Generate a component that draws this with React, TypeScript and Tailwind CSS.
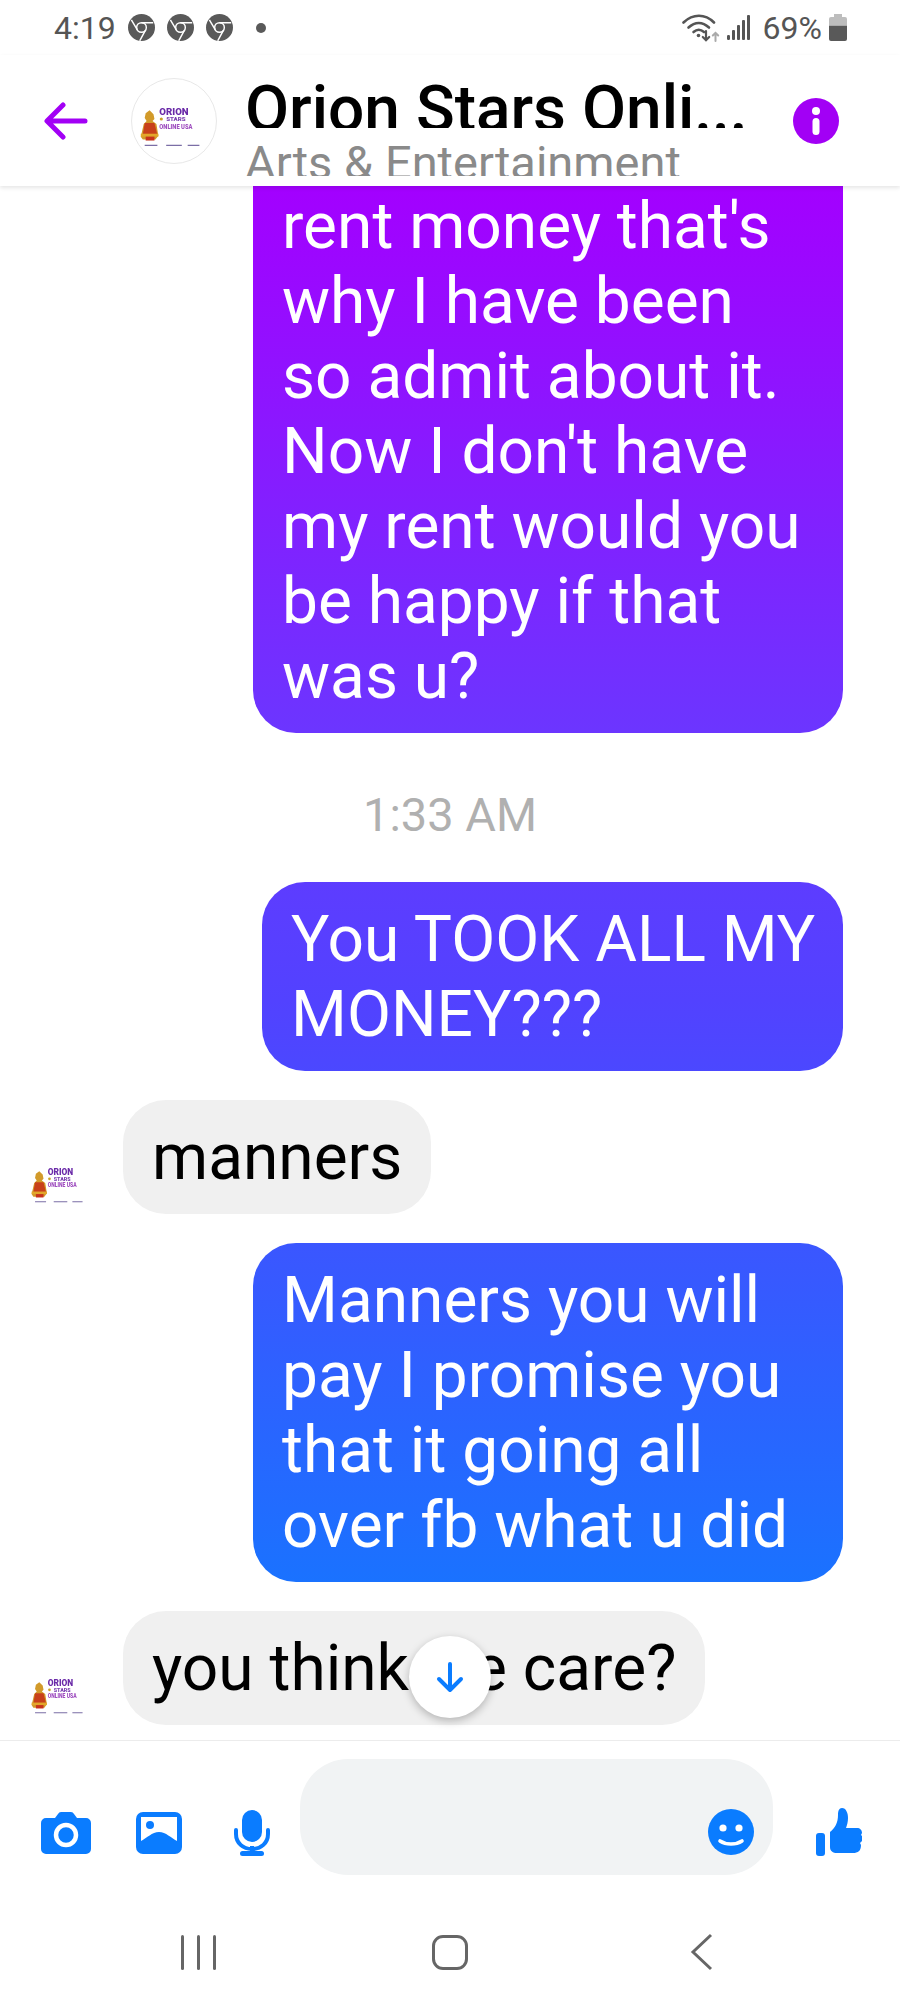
const roboto = "font-['Roboto',sans-serif]";

function ChromeIcon() {
  return (
    <svg width="27" height="27" viewBox="0 0 24 24" fill="none">
      <circle cx="12" cy="12" r="12" fill="#595959" />
      <circle cx="12" cy="12" r="4.3" stroke="#fff" strokeWidth="1.3" />
      <path d="M12 7.7h10.4M8.3 14.2 3 5.2M15.7 14.2 10.4 23.8" stroke="#fff" strokeWidth="1.3" />
    </svg>
  );
}

function WifiIcon() {
  return (
    <svg width="40" height="28" viewBox="0 0 40 28" fill="none" stroke="#555" strokeWidth="2.6" strokeLinecap="round">
      <path d="M1.5 8.5C11 -0.5 23 -0.5 32 8.5" />
      <path d="M6.5 13.5C13 7.5 20.5 7.5 27 13.5" />
      <path d="M11.5 18C15 15 18.5 15 22 18" />
      <circle cx="16.5" cy="21.5" r="1.8" fill="#555" stroke="none" />
      <path d="M24 17v9M20.8 23l3.2 3.2 3.2-3.2" strokeWidth="2.2" />
      <path d="M33.5 27v-8M30.8 21.5l2.7-2.7 2.7 2.7" stroke="#aaa" strokeWidth="2" />
    </svg>
  );
}

function SignalIcon() {
  return (
    <svg width="24" height="26" viewBox="0 0 24 26" fill="#555">
      <rect x="0" y="20" width="3" height="5" rx="1.2" />
      <rect x="5" y="15" width="3" height="10" rx="1" />
      <rect x="10" y="10" width="3" height="15" rx="1" />
      <rect x="15" y="5" width="3" height="20" rx="1" />
      <rect x="20" y="0" width="3" height="25" rx="1" />
    </svg>
  );
}

function BatteryIcon() {
  return (
    <svg width="18" height="27" viewBox="0 0 18 27">
      <path d="M5 0h8v3h3a2 2 0 0 1 2 2v6H0V5a2 2 0 0 1 2-2h3z" fill="#bdbdbd" />
      <path d="M0 11.5h18V25a2 2 0 0 1-2 2H2a2 2 0 0 1-2-2z" fill="#595959" />
    </svg>
  );
}

function OrionLogo({ size }: { size: number }) {
  return (
    <svg width={size} height={size} viewBox="0 0 86 86" className="shrink-0 blur-[0.4px]">
      {/* figure */}
      <path d="M18 32l4 4 1 5-2 2 4 3 2 12-3 4H11l-2-3 3-13 3-3-2-3 1-5z" fill="#d29a2a" />
      <path d="M13 45h10l3 12H11z" fill="#c8401b" />
      <rect x="9" y="56" width="18" height="3" fill="#e2a62a" />
      <rect x="14" y="59" width="9" height="4" fill="#c8321b" />
      {/* wordmark */}
      <text x="43" y="37" textAnchor="middle" fontFamily="Roboto" fontSize="10" fontWeight="900" fill="#6a2aa8" textLength="30" lengthAdjust="spacingAndGlyphs">ORION</text>
      <circle cx="30" cy="41" r="1.6" fill="#c9a227" />
      <text x="45" y="43" textAnchor="middle" fontFamily="Roboto" fontSize="6" fontWeight="900" fill="#7b3fb0" textLength="20" lengthAdjust="spacingAndGlyphs">STARS</text>
      <text x="45" y="51" textAnchor="middle" fontFamily="Roboto" fontSize="7.5" fontWeight="900" fill="#a050c0" textLength="34" lengthAdjust="spacingAndGlyphs">ONLINE USA</text>
      <path d="M13 68h13M35 68h16M57 68h12" stroke="#5a4a90" strokeWidth="1.2" opacity="0.8" />
    </svg>
  );
}

function CameraIcon() {
  return (
    <svg width="50" height="42" viewBox="0 0 50 42">
      <path d="M5 6h9l3-4a4 4 0 0 1 3-2h10a4 4 0 0 1 3 2l3 4h9a5 5 0 0 1 5 5v26a5 5 0 0 1-5 5H5a5 5 0 0 1-5-5V11a5 5 0 0 1 5-5z" fill="#0a7cff" />
      <circle cx="25" cy="23" r="10" fill="none" stroke="#fff" strokeWidth="4.5" />
    </svg>
  );
}

function GalleryIcon() {
  return (
    <svg width="46" height="42" viewBox="0 0 46 42">
      <rect width="46" height="42" rx="7" fill="#0a7cff" />
      <path d="M5 5h36v24c-6-3-11-9-18-9S11 26 5 29z" fill="#fff" />
      <circle cx="14" cy="13" r="4" fill="#0a7cff" />
    </svg>
  );
}

function MicIcon() {
  return (
    <svg width="36" height="46" viewBox="0 0 36 46" fill="#0a7cff">
      <rect x="8" y="0" width="20" height="32" rx="10" />
      <path d="M2 20v4c0 9 7 15 16 15s16-6 16-15v-4" fill="none" stroke="#0a7cff" strokeWidth="4" strokeLinecap="round" />
      <rect x="16" y="36" width="4" height="6" />
      <rect x="6" y="41" width="24" height="5" rx="2.5" />
    </svg>
  );
}

function SmileIcon() {
  return (
    <svg width="46" height="46" viewBox="0 0 46 46">
      <circle cx="23" cy="23" r="23" fill="#0a7cff" />
      <circle cx="15" cy="19" r="3.6" fill="#fff" />
      <circle cx="31" cy="19" r="3.6" fill="#fff" />
      <path d="M12 32c6 4 16 4 22 0" fill="none" stroke="#fff" strokeWidth="3.6" strokeLinecap="round" />
    </svg>
  );
}

function LikeIcon() {
  return (
    <svg width="46" height="48" viewBox="0 0 46 48" fill="#0a7cff">
      <rect x="0" y="25" width="9" height="23" rx="3" />
      <path d="M14 24c5-4 8-9 8-17 0-4 1-7 4-7 4 0 6 5 6 10 0 4-1 7-2 10h11c3 0 5 2 5 5l-1 2 1 1v5l-2 2 1 2c0 6-3 8-8 8H21c-4 0-7-2-7-6z" />
    </svg>
  );
}

function Bubble({ lines, className }: { lines: string[]; className: string }) {
  return (
    <div className={`rounded-[43px] px-[29px] pb-[19px] text-[64px] leading-[75px] whitespace-nowrap ${className}`}>
      {lines.map((l) => (
        <div key={l}>{l}</div>
      ))}
    </div>
  );
}

const sent = "self-end mr-[57px] text-white bg-fixed bg-[linear-gradient(180deg,#a300ff_186px,#6c35ff_730px,#5242ff_1000px,#1a72ff_1582px)]";

function ReceivedRow({ text }: { text: string }) {
  return (
    <div className="flex items-end pl-[24px] gap-[26px] mt-[29px]">
      <div className="-mb-[3px]">
        <OrionLogo size={73} />
      </div>
      <Bubble lines={[text]} className="pt-[20px] bg-[#f0f0f0] text-black" />
    </div>
  );
}

export default function App() {
  return (
    <div className={`w-[900px] h-[2006px] bg-white flex flex-col overflow-hidden ${roboto}`}>
      <div className="h-[55px] shrink-0 flex items-center pl-[54px] pr-[53px] text-[#555]">
        <span className="text-[32px] mr-[12px]">4:19</span>
        <div className="flex gap-[12px]">
          <ChromeIcon />
          <ChromeIcon />
          <ChromeIcon />
        </div>
        <span className="w-[10px] h-[10px] rounded-full bg-[#595959] ml-[23px]" />
        <div className="ml-auto flex items-center">
          <WifiIcon />
          <span className="ml-[5px]"><SignalIcon /></span>
          <span className="text-[32px] ml-[12px]">69%</span>
          <span className="ml-[7px]"><BatteryIcon /></span>
        </div>
      </div>

      <div className="h-[131px] shrink-0 flex items-center relative z-10 shadow-[0_2px_4px_rgba(0,0,0,0.1)] bg-white">
        <svg width="44" height="38" viewBox="0 0 44 38" fill="none" stroke="#a200f5" strokeWidth="5" strokeLinecap="round" strokeLinejoin="round" className="ml-[44px]">
          <path d="M41 19H4M19 3 3 19l16 16" />
        </svg>
        <div className="w-[86px] h-[86px] rounded-full border border-[#e8e8e8] ml-[43px] overflow-hidden shrink-0">
          <OrionLogo size={84} />
        </div>
        <div className="ml-[28px] w-[510px] self-start">
          <div className="h-[73px] overflow-hidden pt-[17px] text-[64px] leading-[75px] font-medium text-black whitespace-nowrap">Orion Stars Onli...</div>
          <div className="h-[48px] overflow-hidden pt-[7px] text-[47px] leading-[56px] text-[#8a8a8a] whitespace-nowrap">Arts &amp; Entertainment</div>
        </div>
        <svg width="46" height="46" viewBox="0 0 46 46" className="ml-[38px]">
          <circle cx="23" cy="23" r="23" fill="#a200f5" />
          <circle cx="23" cy="13" r="4" fill="#fff" />
          <rect x="19.5" y="20" width="7" height="17" rx="3.5" fill="#fff" />
        </svg>
      </div>

      <div className="relative flex-1 min-h-0 overflow-hidden flex flex-col justify-end pb-[15px]">
        <div className={`${sent} shrink-0 rounded-[43px]`}>
          <Bubble
            lines={["rent money that's", "why I have been", "so admit about it.", "Now I don't have", "my rent would you", "be happy if that", "was u?"]}
            className="pt-[80px] w-[590px]"
          />
        </div>
        <div className="shrink-0 text-center text-[47px] leading-[50px] text-[#b0b0b0] mt-[57px] mb-[42px]">1:33 AM</div>
        <div className={`${sent} shrink-0 rounded-[43px]`}>
          <Bubble lines={["You TOOK ALL MY", "MONEY???"]} className="pt-[20px] w-[581px]" />
        </div>
        <ReceivedRow text="manners" />
        <div className={`${sent} shrink-0 rounded-[43px] mt-[29px]`}>
          <Bubble
            lines={["Manners you will", "pay I promise you", "that it going all", "over fb what u did"]}
            className="pt-[20px] w-[590px]"
          />
        </div>
        <ReceivedRow text="you think we care?" />

        <div className="absolute left-1/2 -translate-x-1/2 bottom-[22px] w-[82px] h-[82px] rounded-full bg-white shadow-[0_3px_8px_rgba(0,0,0,0.25)] flex items-center justify-center">
          <svg width="28" height="32" viewBox="0 0 28 32" fill="none" stroke="#0a7cff" strokeWidth="4" strokeLinecap="round" strokeLinejoin="round">
            <path d="M14 3v26M3 18l11 11 11-11" />
          </svg>
        </div>
      </div>

      <div className="border-t border-[#ececec] shrink-0 flex items-start pt-[18px] pl-[41px]">
        <div className="flex items-center mt-[51px]">
          <CameraIcon />
          <span className="ml-[45px]"><GalleryIcon /></span>
          <span className="ml-[52px]"><MicIcon /></span>
        </div>
        <div className="w-[473px] h-[116px] ml-[30px] rounded-[48px] bg-[#f1f3f4] flex items-end justify-end pr-[19px] pb-[20px]">
          <SmileIcon />
        </div>
        <div className="ml-[43px] mt-[49px]">
          <LikeIcon />
        </div>
      </div>

      <div className="h-[131px] shrink-0 grid grid-cols-3 place-items-center content-start px-[73px] pt-[58px]">
        <div className="flex gap-[13px]">
          <span className="w-[3px] h-[35px] bg-[#666] rounded-sm" />
          <span className="w-[3px] h-[35px] bg-[#666] rounded-sm" />
          <span className="w-[3px] h-[35px] bg-[#666] rounded-sm" />
        </div>
        <span className="w-[36px] h-[35px] border-[3px] border-[#666] rounded-[11px]" />
        <svg width="23" height="38" viewBox="0 0 23 38" fill="none" stroke="#666" strokeWidth="3">
          <path d="M21 2 3 19l18 17" />
        </svg>
      </div>
    </div>
  );
}
